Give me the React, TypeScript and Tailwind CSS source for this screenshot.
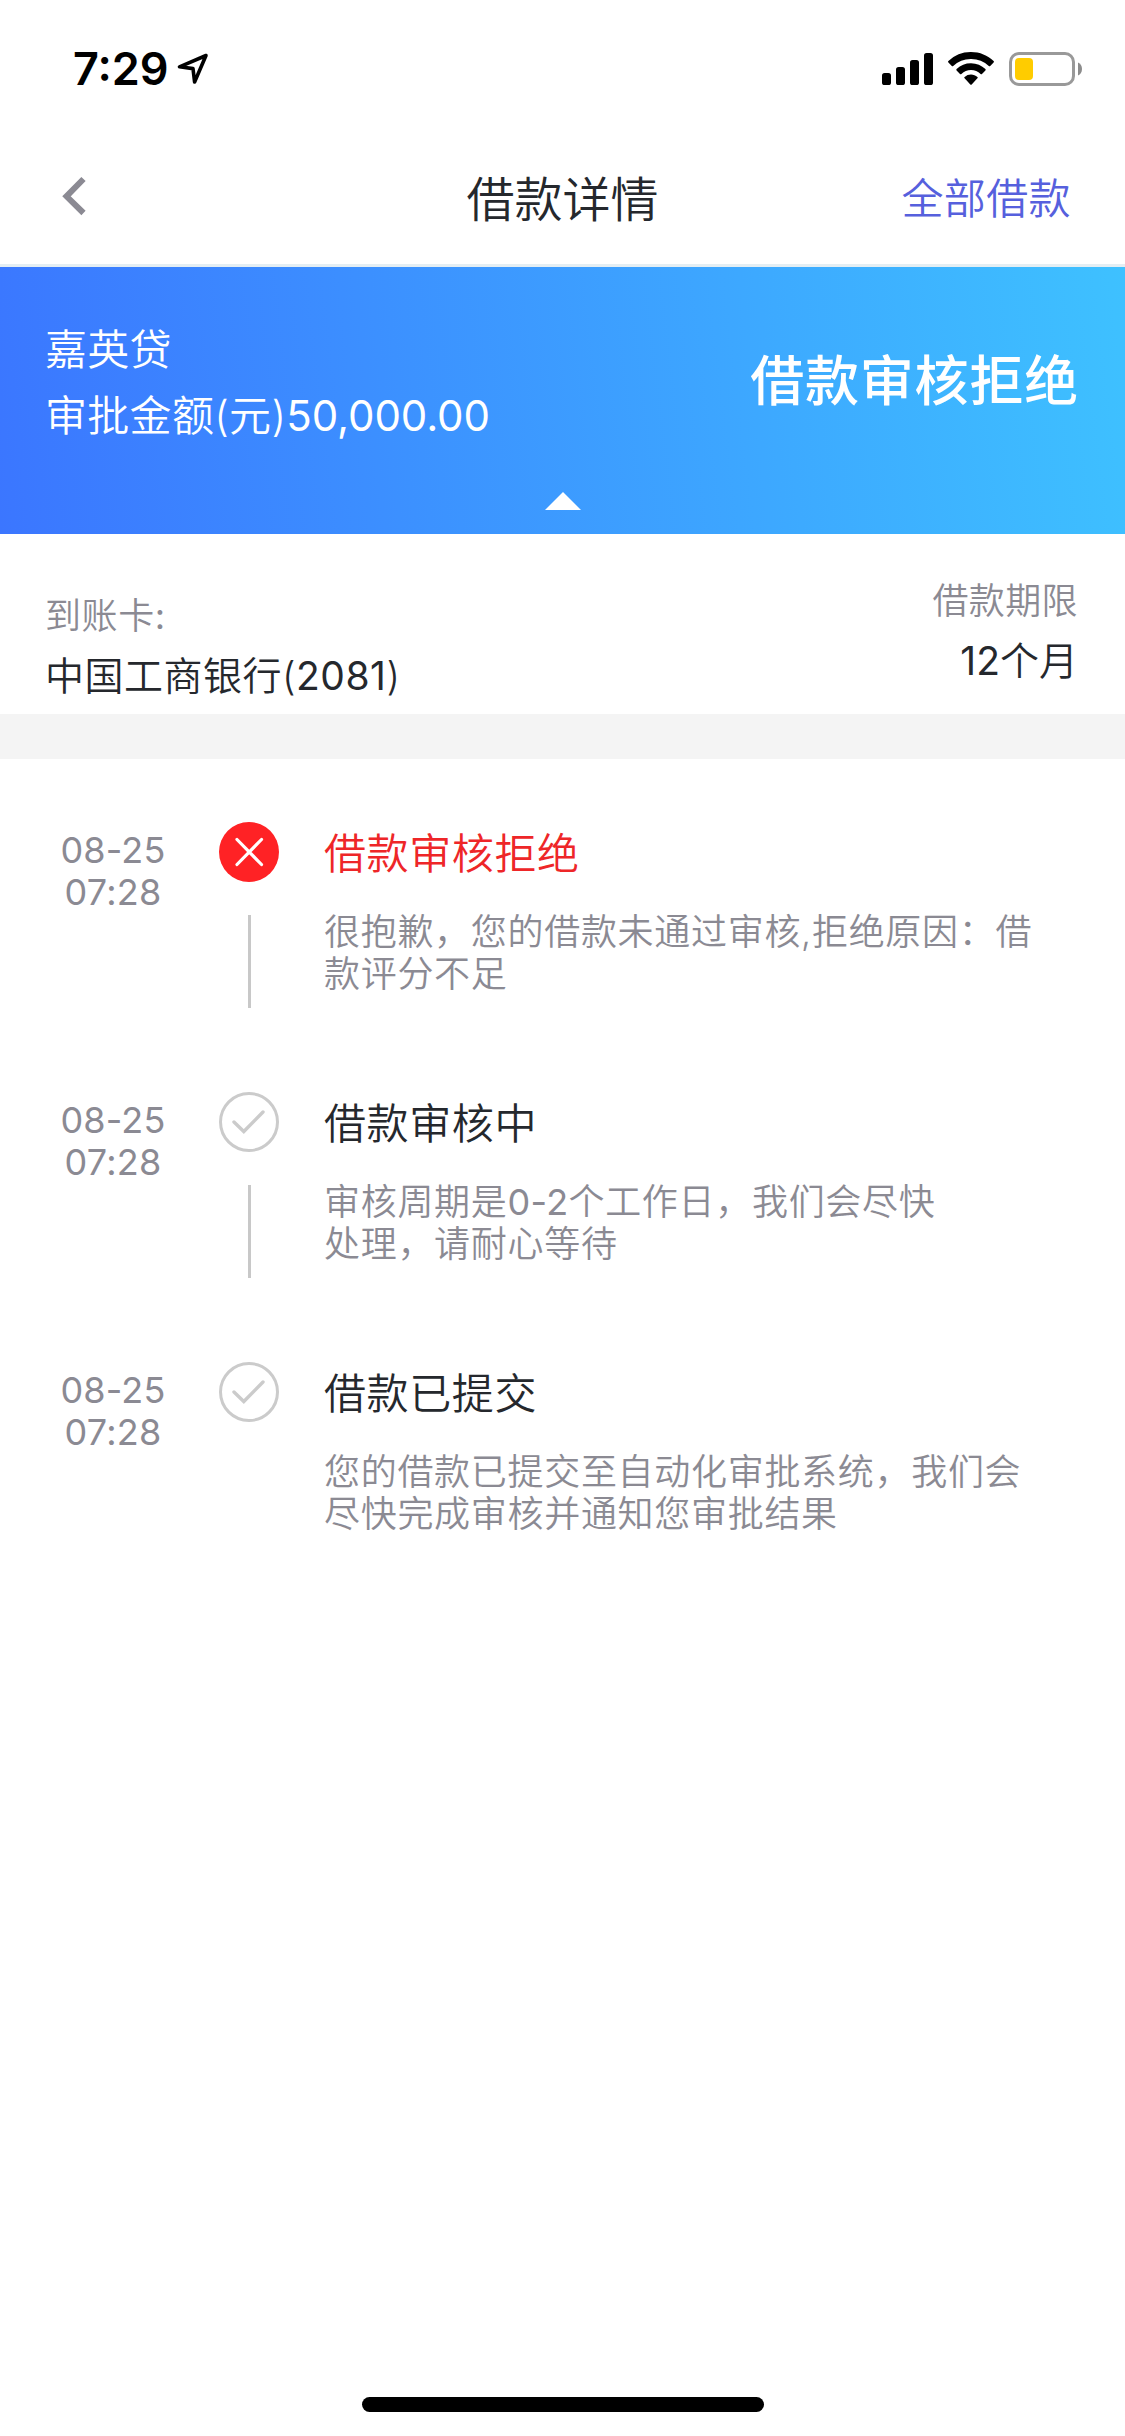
import type { ReactNode } from "react";
import clsx from "clsx";

type Step = {
  date: string;
  time: string;
  title: string;
  lines: ReactNode[];
  rejected?: boolean;
};

const steps: Step[] = [
  {
    date: "08-25",
    time: "07:28",
    title: "借款审核拒绝",
    lines: ["很抱歉，您的借款未通过审核,拒绝原因：借", "款评分不足"],
    rejected: true,
  },
  {
    date: "08-25",
    time: "07:28",
    title: "借款审核中",
    lines: [
      <>
        审核周期是<span className="font-normal tracking-[0.3px]">0-2</span>个工作日，我们会尽快
      </>,
      "处理，请耐心等待",
    ],
  },
  {
    date: "08-25",
    time: "07:28",
    title: "借款已提交",
    lines: ["您的借款已提交至自动化审批系统，我们会", "尽快完成审核并通知您审批结果"],
  },
];

function StatusBar() {
  return (
    <div className="h-[132px] pl-[73px] pr-[43px] pt-[46px] flex justify-between items-start text-black">
      <div className="flex items-center">
        <span className="text-[45px] leading-[46px] font-semibold">7:29</span>
        <svg className="ml-[8px]" width="32" height="32" viewBox="0 0 32 32" fill="none">
          <path
            d="M29 2.5L2.5 13.8L16 15.6L17.6 29L29 2.5Z"
            stroke="currentColor"
            strokeWidth="3.6"
            strokeLinejoin="round"
          />
        </svg>
      </div>

      <div className="flex items-start pt-[6px]">
        <svg width="51" height="33" viewBox="0 0 51 33" fill="currentColor">
          <rect x="0" y="21" width="9" height="12" rx="2.6" />
          <rect x="14" y="15" width="9" height="18" rx="2.6" />
          <rect x="28" y="8" width="9" height="25" rx="2.6" />
          <rect x="42" y="1" width="9" height="32" rx="2.6" />
        </svg>
        <svg className="ml-[15px]" width="46" height="33" viewBox="0 0 46 33" fill="currentColor">
          <path d="M23 0C31.8 0 39.8 3.4 45.6 9a1 1 0 0 1 0 1.4l-3.4 3.5a1 1 0 0 1-1.4 0A25.5 25.5 0 0 0 23 6.9A25.5 25.5 0 0 0 5.2 13.9a1 1 0 0 1-1.4 0L.4 10.4a1 1 0 0 1 0-1.4A32.4 32.4 0 0 1 23 0Z" />
          <path d="M23 11.2c5.6 0 10.7 2.2 14.4 5.8a1 1 0 0 1 0 1.4L34 21.9a1 1 0 0 1-1.4 0a14 14 0 0 0-19.2 0a1 1 0 0 1-1.4 0l-3.4-3.5a1 1 0 0 1 0-1.4A20.7 20.7 0 0 1 23 11.2Z" />
          <path d="M23 22.6c2.4 0 4.7.9 6.4 2.4a.9.9 0 0 1 0 1.3L23.7 32.5a1 1 0 0 1-1.4 0L16.6 26.3a.9.9 0 0 1 0-1.3A9.7 9.7 0 0 1 23 22.6Z" />
        </svg>
        <svg className="ml-[15px]" width="73" height="34" viewBox="0 0 73 34">
          <rect x="1.5" y="1.5" width="63" height="31" rx="8.5" fill="none" stroke="#999" strokeWidth="3" />
          <rect x="6" y="6" width="18" height="22" rx="4" fill="#fc0" />
          <path d="M69 10.5c2.5 1 4 3.5 4 6.5s-1.5 5.5-4 6.5Z" fill="#8c8c8c" />
        </svg>
      </div>
    </div>
  );
}

function Header() {
  return (
    <header className="h-[135px] border-b-[3px] border-[#e4eef3] grid grid-cols-3 items-center px-[54px]">
      <svg width="36" height="40" viewBox="0 0 36 40" fill="none" className="mb-[4px] ml-px text-[#8b8a93]">
        <path d="M28.5 3L11.5 20.3L28.5 37" stroke="currentColor" strokeWidth="6" />
      </svg>
      <h1 className="pt-[3px] text-center text-[48px] leading-[60px] text-[#25282d]">借款详情</h1>
      <a className="pt-px text-right text-[42px] leading-[60px] tracking-[0.4px] text-[#5660dd]">全部借款</a>
    </header>
  );
}

function StatusIcon({ rejected }: { rejected?: boolean }) {
  if (rejected) {
    return (
      <svg width="60" height="60" viewBox="0 0 60 60" fill="none">
        <circle cx="30" cy="30" r="30" fill="#ff2225" />
        <path d="M18 17.5L42.5 42.5M42.5 17.5L18 42.5" stroke="#fff" strokeWidth="3.2" strokeLinecap="round" />
      </svg>
    );
  }
  return (
    <svg width="60" height="60" viewBox="0 0 60 60" fill="none" stroke="#cbcbcb">
      <circle cx="30" cy="30" r="28.5" strokeWidth="3" />
      <path d="M15 30L24.8 39.5L44 20" strokeWidth="3.4" strokeLinecap="round" />
    </svg>
  );
}

function TimelineItem({ step, last }: { step: Step; last: boolean }) {
  return (
    <li className="h-[270px] flex items-start">
      <div className="w-[226px] pt-[7px] text-center text-[36px] leading-[42px] font-normal tracking-[0.2px] text-[#8b8a93]">
        <div>{step.date}</div>
        <div>{step.time}</div>
      </div>
      <div className="-ml-[7px] w-[60px] flex flex-col items-center">
        <StatusIcon rejected={step.rejected} />
        {!last && <div className="mt-[33px] ml-px w-[3px] h-[93px] bg-[#c8c8c8]" />}
      </div>
      <div className="ml-[45px] pt-[2px]">
        <h2
          className={clsx(
            "text-[42px] leading-[60px] tracking-[0.6px]",
            step.rejected ? "text-[#ee2628]" : "text-[#25282d]"
          )}
        >
          {step.title}
        </h2>
        <p className="mt-[27px] text-[36px] leading-[42px] tracking-[0.7px] text-[#8b8a93] whitespace-nowrap">
          {step.lines.map((line, i) => (
            <span key={i} className="block">
              {line}
            </span>
          ))}
        </p>
      </div>
    </li>
  );
}

export default function App() {
  return (
    <div
      lang="zh-CN"
      className="w-[1125px] h-[2436px] bg-white flex flex-col overflow-hidden font-[350] font-['Inter','Noto_Sans_CJK_SC',sans-serif]"
    >
      <StatusBar />
      <Header />

      {/* Loan banner */}
      <section className="h-[267px] px-[45px] flex flex-col justify-between text-white bg-[linear-gradient(83deg,#3b76ff_0%,#3ec1ff_100%)]">
        <div className="flex justify-between">
          <div className="pt-[50px] text-[42px] leading-[66px] tracking-[0.3px]">
            <div>嘉英贷</div>
            <div>
              审批金额(元)<span className="font-normal tracking-[-0.1px]">50,000.00</span>
            </div>
          </div>
          <div className="pt-[80px] pr-px text-[54px] leading-[70px] font-medium tracking-[0.8px]">借款审核拒绝</div>
        </div>
        <svg className="self-center mb-6" width="36" height="18" viewBox="0 0 36 18" fill="currentColor">
          <path d="M18 0L36 18H0Z" />
        </svg>
      </section>

      {/* Card and term */}
      <section className="h-[180px] pl-[45px] pr-[47px] flex justify-between">
        <div className="pt-[52px]">
          <div className="text-[36px] leading-[60px] tracking-[0.6px] text-[#8b8a93]">
            到账卡<span className="font-normal">:</span>
          </div>
          <div className="text-[39px] leading-[59px] tracking-[0.5px] text-[#25282d]">
            中国工商银行(<span className="font-normal">2081</span>)
          </div>
        </div>
        <div className="pt-[37px] text-right">
          <div className="text-[36px] leading-[60px] tracking-[0.4px] text-[#8b8a93]">借款期限</div>
          <div className="text-[39px] leading-[59px] text-[#25282d]">
            <span className="font-normal">12</span>个月
          </div>
        </div>
      </section>

      <div className="h-[45px] bg-[#f4f4f4]" />

      {/* Progress timeline */}
      <ul className="pt-[63px]">
        {steps.map((step, i) => (
          <TimelineItem key={step.title} step={step} last={i === steps.length - 1} />
        ))}
      </ul>

      <div className="mt-auto mb-6 self-center w-[402px] h-[15px] rounded-full bg-black" />
    </div>
  );
}
